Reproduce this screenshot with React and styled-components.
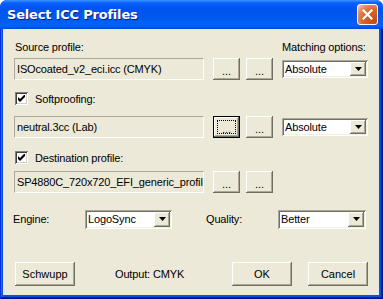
import styled, { createGlobalStyle } from "styled-components"

const GlobalStyle = createGlobalStyle`
  html, body {
    margin: 0;
    padding: 0;
    background: #ffffff;
  }
  body {
    font-family: "Liberation Sans", Arial, sans-serif;
    font-size: 11px;
    letter-spacing: -0.15px;
    color: #000000;
  }
`

const Window = styled.div`
  width: 383px;
  height: 299px;
  display: flex;
  flex-direction: column;
  border-radius: 7px 7px 0 0;
  overflow: hidden;
  background: #0553e3;
`

const TitleBar = styled.div`
  height: 29px;
  flex: none;
  display: flex;
  align-items: center;
  justify-content: space-between;
  padding: 0 5px 0 7px;
  box-sizing: border-box;
  background: linear-gradient(
    180deg,
    #3d95ff 0%,
    #0a5fff 10%,
    #0053ee 30%,
    #0058ee 60%,
    #0063fa 85%,
    #005bf2 92%,
    #0046dd 100%
  );
`

const Title = styled.span`
  color: #ffffff;
  font-weight: bold;
  font-size: 13px;
  letter-spacing: -0.2px;
  text-shadow: 1px 1px #0f1b89;
  font-family: "DejaVu Sans", "Liberation Sans", sans-serif;
`

const CloseButton = styled.div`
  width: 21px;
  height: 21px;
  box-sizing: border-box;
  border: 1px solid #ffffff;
  border-radius: 3px;
  display: flex;
  align-items: center;
  justify-content: center;
  background: radial-gradient(
    circle at 85% 85%,
    #c84a14 0%,
    #dc6527 50%,
    #e58b5f 75%,
    #f7c2a5 95%
  );
`

const Frame = styled.div`
  flex: 1;
  display: flex;
  padding: 0 4px 4px 3px;
  background: #0553e3;
  box-shadow: inset 1px 0 #0831d9, inset -1px -1px #00138c, inset -2px -2px #001ea0,
    inset 2px 0 #166aee;
`

const Body = styled.div`
  flex: 1;
  display: flex;
  flex-direction: column;
  background: #ece9d8;
  padding: 12px 11px 9px 11px;
`

const HeadRow = styled.div`
  display: flex;
  height: 13px;
  line-height: 13px;
  margin-bottom: 4px;
`

const Label = styled.span`
  flex: ${(p) => (p.$grow ? 1 : "none")};
  width: ${(p) => (p.$width ? `${p.$width}px` : "auto")};
  padding-left: ${(p) => p.$indent || 0}px;
  line-height: 13px;
  white-space: nowrap;
`

const ProfileRow = styled.div`
  display: flex;
  align-items: center;
  height: 22px;
  margin-top: ${(p) => p.$top || 0}px;
`

const Field = styled.div`
  width: 190px;
  height: 22px;
  box-sizing: border-box;
  border-top: 1px solid #aca899;
  border-left: 1px solid #aca899;
  border-bottom: 1px solid #ffffff;
  border-right: 1px solid #ffffff;
  padding: 0 2px;
  line-height: 20px;
  white-space: nowrap;
  overflow: hidden;
`

const Browse = styled.div`
  display: flex;
  gap: 6px;
  margin-left: 9px;
  margin-right: 9px;
`

const PushButton = styled.button`
  width: ${(p) => p.$width}px;
  height: ${(p) => p.$height}px;
  box-sizing: border-box;
  padding: 0;
  margin: 0 0 0 ${(p) => p.$gap || 0}px;
  font: inherit;
  color: #000000;
  background: #ece9d8;
  border: ${(p) => (p.$focused ? "1px solid #000000" : "none")};
  box-shadow: inset -1px -1px #716f64, inset 1px 1px #ffffff, inset -2px -2px #aca899;
  display: flex;
  align-items: center;
  justify-content: center;
  position: relative;
`

const FocusRing = styled.span`
  position: absolute;
  inset: 3px;
  border: 1px dotted #000000;
`

const Dots = styled.span`
  line-height: 8px;
  margin-top: 4px;
`

const Select = styled.div`
  width: ${(p) => p.$width}px;
  height: ${(p) => p.$height || 18}px;
  box-sizing: border-box;
  display: flex;
  align-items: stretch;
  background: #ffffff;
  box-shadow: inset 1px 1px #aca899, inset -1px -1px #ffffff, inset 2px 2px #716f64,
    inset -2px -2px #f1efe2;
  padding: 2px;
`

const SelectText = styled.span`
  flex: 1;
  padding-left: 1px;
  line-height: 14px;
  white-space: nowrap;
`

const ArrowButton = styled.span`
  width: 16px;
  flex: none;
  background: #ece9d8;
  box-shadow: inset -1px -1px #716f64, inset 1px 1px #ffffff, inset -2px -2px #aca899;
  display: flex;
  align-items: center;
  justify-content: center;
`

const CheckRow = styled.label`
  display: flex;
  align-items: center;
  gap: 7px;
  height: 13px;
  padding-left: 1px;
  margin-top: ${(p) => p.$top}px;
`

const CheckBox = styled.span`
  width: 13px;
  height: 13px;
  box-sizing: border-box;
  background: #ffffff;
  box-shadow: inset 1px 1px #808080, inset -1px -1px #ffffff, inset 2px 2px #404040,
    inset -2px -2px #d4d0c8;
  display: flex;
  align-items: center;
  justify-content: center;
`

const EngineRow = styled.div`
  display: grid;
  grid-template-columns: 72px 87px 34px 72px 88px;
  align-items: center;
  margin-top: 16px;
  margin-left: -1px;
  height: 20px;
`

const ButtonRow = styled.div`
  margin-top: auto;
  display: flex;
  align-items: center;
  padding-left: 1px;
`

const Output = styled.span`
  margin-left: 40px;
  flex: 1;
`

const Arrow = () => (
  <svg width="7" height="4" viewBox="0 0 7 4">
    <path d="M0 0h7L3.5 4z" fill="#000" />
  </svg>
)

const Check = () => (
  <svg width="7" height="7" viewBox="0 0 7 7">
    <path d="M0 2v3l2 2 5-5V-1L2 4z" fill="#000" />
  </svg>
)

function Dropdown({ value, width, height }) {
  return (
    <Select $width={width} $height={height}>
      <SelectText>{value}</SelectText>
      <ArrowButton>
        <Arrow />
      </ArrowButton>
    </Select>
  )
}

function ProfileLine({ value, top, focused, match }) {
  return (
    <ProfileRow $top={top}>
      <Field>{value}</Field>
      <Browse>
        <PushButton $width={27} $height={22} $focused={focused}>
          {focused && <FocusRing />}
          <Dots>...</Dots>
        </PushButton>
        <PushButton $width={27} $height={22}>
          <Dots>...</Dots>
        </PushButton>
      </Browse>
      {match && <Dropdown value={match} width={86} />}
    </ProfileRow>
  )
}

export default function App() {
  return (
    <>
      <GlobalStyle />
      <Window>
        <TitleBar>
          <Title>Select ICC Profiles</Title>
          <CloseButton>
            <svg width="11" height="11" viewBox="0 0 11 11">
              <path
                d="M1.5 1.5l8 8M9.5 1.5l-8 8"
                stroke="#fff"
                strokeWidth="2.2"
                strokeLinecap="square"
              />
            </svg>
          </CloseButton>
        </TitleBar>
        <Frame>
          <Body>
            <HeadRow>
              <Label $grow $indent={1}>
                Source profile:
              </Label>
              <Label $width={86} $indent={1}>
                Matching options:
              </Label>
            </HeadRow>
            <ProfileLine value="ISOcoated_v2_eci.icc (CMYK)" match="Absolute" />

            <CheckRow $top={12}>
              <CheckBox>
                <Check />
              </CheckBox>
              Softproofing:
            </CheckRow>
            <ProfileLine value="neutral.3cc (Lab)" top={11} focused match="Absolute" />

            <CheckRow $top={13}>
              <CheckBox>
                <Check />
              </CheckBox>
              Destination profile:
            </CheckRow>
            <ProfileLine value="SP4880C_720x720_EFI_generic_profile" top={7} />

            <EngineRow>
              <Label>Engine:</Label>
              <Dropdown value="LogoSync" width={87} height={19} />
              <span />
              <Label>Quality:</Label>
              <Dropdown value="Better" width={88} height={19} />
            </EngineRow>

            <ButtonRow>
              <PushButton $width={60} $height={24}>
                Schwupp
              </PushButton>
              <Output>Output: CMYK</Output>
              <PushButton $width={60} $height={24}>
                OK
              </PushButton>
              <PushButton $width={60} $height={24} $gap={16}>
                Cancel
              </PushButton>
            </ButtonRow>
          </Body>
        </Frame>
      </Window>
    </>
  )
}
